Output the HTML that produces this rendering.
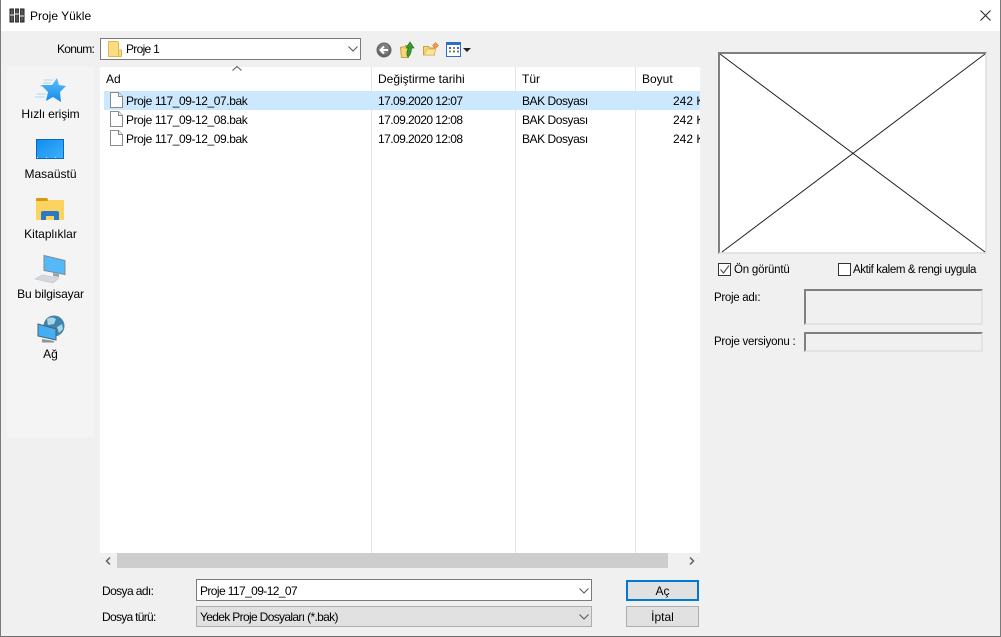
<!DOCTYPE html>
<html><head><meta charset="utf-8"><style>
html,body{margin:0;padding:0}
body{width:1001px;height:637px;overflow:hidden;position:relative;background:#f0f0f0;font:12px "Liberation Sans",sans-serif;color:#000}
.a{position:absolute}
.t{position:absolute;white-space:nowrap;line-height:14px}
.c{text-align:center}
.n{letter-spacing:-.42px}
.d{letter-spacing:-.56px}
.b{letter-spacing:-.45px}
.r{font-size:11.5px}
svg{position:absolute;overflow:visible}
</style></head><body>
<div class="a" style="left:0;top:0;width:1001px;height:31px;background:#fff"></div>
<div class="a" style="left:0;top:636px;width:1001px;height:1px;background:#6e6e6e"></div>
<div class="a" style="left:0;top:0;width:1px;height:637px;background:#7a7a7a"></div>
<div class="a" style="left:1000px;top:0;width:1px;height:637px;background:#7a7a7a"></div>

<svg style="left:9px;top:8px" width="16" height="15" viewBox="0 0 16 15"><path d="M1 1h4v13H1zM6 1h4v13H6zM11 1h4v13h-4z" fill="#555" stroke="#222"/><path d="M1 7h4M6 6h4M11 8h4" stroke="#eee"/><path d="M5.500 0v15M10.500 0v15" stroke="#fff"/></svg>
<div class="t" style="left:30px;top:9px;font-size:12px">Proje Yükle</div>
<svg style="left:980px;top:10px" width="11" height="11" viewBox="0 0 11 11"><path d="M.5.500l10 10M10.500.500l-10 10" stroke="#222" fill="none"/></svg>

<div class="t" style="left:57px;top:42px;letter-spacing:-.7px">Konum:</div>
<div class="a" style="left:100px;top:38px;width:259px;height:20px;background:#fff;border:1px solid #7a7a7a"></div>
<svg style="left:108px;top:41px" width="14" height="16" viewBox="0 0 14 16"><path d="M.5.500h9l1 1v14H.500z" fill="#fbdc85" stroke="#e2b84f"/><path d="M10.500 9h3v6.500h-3z" fill="#f8d775" stroke="#e2b84f"/></svg>
<div class="t" style="left:126px;top:42px;letter-spacing:-.7px">Proje 1</div>
<svg style="left:348px;top:46px" width="10" height="6" viewBox="0 0 10 6"><path d="M.5.500L5 5 9.500.500" stroke="#555" fill="none"/></svg>

<svg style="left:376px;top:42px" width="16" height="16" viewBox="0 0 16 16"><circle cx="8" cy="8" r="7.500" fill="#666"/><circle cx="8" cy="7" r="5.500" fill="#808080"/><path d="M12 8H5M8 4.500L4.500 8 8 11.500" stroke="#fff" stroke-width="2" fill="none"/></svg>
<svg style="left:400px;top:41px" width="15" height="17" viewBox="0 0 15 17"><path d="M.5 6.500l5-1v-1h3v12H1.500z" fill="#f5d779" stroke="#c9a23e"/><path d="M8 16c-2-3-1-7 .5-9H6l4-6 4 6h-2.500c0 4-1 7-3.500 9z" fill="#3b9a2e" stroke="#21751c" stroke-width=".7"/></svg>
<svg style="left:423px;top:42px" width="16" height="15" viewBox="0 0 16 15"><path d="M.5 4.500h5l1 1.500h5v7H.500z" fill="#f5d779" stroke="#c9a23e"/><path d="M1 13l3-6h9l-2 6z" fill="#fbe59c" stroke="#d9b44e" stroke-width=".7"/><circle cx="12.500" cy="3.500" r="2.500" fill="#ec7b3a"/><path d="M12.500 0v7M9 3.500h7" stroke="#f0a060"/></svg>
<svg style="left:446px;top:42px" width="25" height="15" viewBox="0 0 25 15"><rect x=".5" y=".5" width="14" height="14" fill="#fff" stroke="#2a70c8"/><path d="M.5 1h14v2H.500z" fill="#2a70c8"/><path d="M3 5h2v2H3z" fill="#2a70c8"/><path d="M7 5h2v2H7z" fill="#d0703a"/><path d="M11 5h2v2h-2z" fill="#2a70c8"/><path d="M3 8.500h2v2H3z" fill="#888"/><path d="M7 8.500h2v2H7z" fill="#3a9a50"/><path d="M11 8.500h2v2h-2z" fill="#777"/><path d="M17 6h8l-4 4z" fill="#222"/></svg>

<!-- sidebar -->
<div class="a" style="left:7px;top:67px;width:87px;height:370px;background:#f4f4f4"></div>
<svg style="left:35px;top:77px" width="32" height="27" viewBox="0 0 32 27"><defs><linearGradient id="s" x1="0" y1="0" x2="0" y2="1"><stop offset="0" stop-color="#5cc0fb"/><stop offset="1" stop-color="#1488ea"/></linearGradient></defs><path d="M9 3h9M8 6h8M5 9h6M2 17h9M0 20h10" stroke="#a8d8f6"/><path d="M22 1l2 7 7 1-6 6 1 10-8-5-7 4 2-9-7-7 11 0z" fill="url(#s)"/></svg>
<div class="t c" style="left:7px;width:87px;top:107px;letter-spacing:-.1px">Hızlı erişim</div>
<svg style="left:36px;top:139px" width="28" height="21" viewBox="0 0 28 21"><defs><linearGradient id="d" x1="0" y1="0" x2="1" y2="1"><stop offset="0" stop-color="#0f8df0"/><stop offset="1" stop-color="#3fb0fc"/></linearGradient></defs><rect x=".5" y=".5" width="27" height="19" fill="url(#d)" stroke="#0e67b8"/><path d="M1 18.500h26" stroke="#bfe3fa" stroke-dasharray="1 8"/></svg>
<div class="t c" style="left:7px;width:87px;top:167px">Masaüstü</div>
<svg style="left:36px;top:197px" width="28" height="24" viewBox="0 0 28 24"><path d="M0 2q0-1 1-1h10l2 3h-13z" fill="#d69a0e"/><path d="M0 4h11l2-1h14q1 0 1 1v19H0z" fill="#fcd35f"/><path d="M5 23v-7q0-2 2-2h14q2 0 2 2v7h-5v-4h-8v4z" fill="#2a79c9"/></svg>
<div class="t c" style="left:7px;width:87px;top:227px">Kitaplıklar</div>
<svg style="left:33px;top:255px" width="33" height="28" viewBox="0 0 33 28"><path d="M11 .5l21 5v14l-21-4z" fill="#55b8f8" stroke="#7b8a96"/><path d="M20 18l6 1v3l-6-1z" fill="#98a2aa"/><path d="M2 24l7-4 17 3-6 5z" fill="#d4d8dc" stroke="#c0c5ca" stroke-width=".6"/></svg>
<div class="t c" style="left:7px;width:87px;top:287px;letter-spacing:-.15px">Bu bilgisayar</div>
<svg style="left:36px;top:315px" width="28" height="28" viewBox="0 0 28 28"><circle cx="18" cy="11" r="10.500" fill="#3f84ac"/><path d="M11 4q5-3 9 0l-2 5-6 1zM21 12l5-3 1 5-4 4z" fill="#a9d4e6"/><path d="M2 9l18 5v11L2 21z" fill="#43aef4" stroke="#4d6272"/><path d="M6 24l12 2v1.500H6z" fill="#8a949c"/></svg>
<div class="t c" style="left:7px;width:87px;top:347px">Ağ</div>

<!-- list -->
<div class="a" style="left:100px;top:67px;width:600px;height:486px;background:#fff"></div>
<div class="a" style="left:371px;top:67px;width:1px;height:486px;background:#e5e5e5"></div>
<div class="a" style="left:515px;top:67px;width:1px;height:486px;background:#e5e5e5"></div>
<div class="a" style="left:635px;top:67px;width:1px;height:486px;background:#e5e5e5"></div>
<svg style="left:232px;top:66px" width="10" height="5" viewBox="0 0 10 5"><path d="M.5 4.500L5 .5l4.500 4" stroke="#555" fill="none"/></svg>
<div class="t" style="left:106px;top:72px">Ad</div>
<div class="t" style="left:378px;top:72px">Değiştirme tarihi</div>
<div class="t" style="left:522px;top:72px">Tür</div>
<div class="t" style="left:642px;top:72px">Boyut</div>
<div class="a" style="left:104px;top:91px;width:596px;height:19px;background:#cce8ff"></div>

<svg style="left:110px;top:92px" width="13" height="16" viewBox="0 0 13 16"><path d="M.5.500h8l4 4v11H.500z" fill="#fff" stroke="#8a8a8a"/><path d="M8.500.500v4h4" fill="#eee" stroke="#8a8a8a"/></svg>
<div class="t n" style="left:126px;top:94px">Proje 117_09-12_07.bak</div>
<div class="t d" style="left:378px;top:94px">17.09.2020 12:07</div>
<div class="t b" style="left:522px;top:94px">BAK Dosyası</div>
<div class="a" style="left:636px;top:94px;width:64px;height:14px;overflow:hidden"><div class="t" style="left:37px;top:0">242 KB</div></div>

<svg style="left:110px;top:111px" width="13" height="16" viewBox="0 0 13 16"><path d="M.5.500h8l4 4v11H.500z" fill="#fff" stroke="#8a8a8a"/><path d="M8.500.500v4h4" fill="#eee" stroke="#8a8a8a"/></svg>
<div class="t n" style="left:126px;top:113px">Proje 117_09-12_08.bak</div>
<div class="t d" style="left:378px;top:113px">17.09.2020 12:08</div>
<div class="t b" style="left:522px;top:113px">BAK Dosyası</div>
<div class="a" style="left:636px;top:113px;width:64px;height:14px;overflow:hidden"><div class="t" style="left:37px;top:0">242 KB</div></div>

<svg style="left:110px;top:130px" width="13" height="16" viewBox="0 0 13 16"><path d="M.5.500h8l4 4v11H.500z" fill="#fff" stroke="#8a8a8a"/><path d="M8.500.500v4h4" fill="#eee" stroke="#8a8a8a"/></svg>
<div class="t n" style="left:126px;top:132px">Proje 117_09-12_09.bak</div>
<div class="t d" style="left:378px;top:132px">17.09.2020 12:08</div>
<div class="t b" style="left:522px;top:132px">BAK Dosyası</div>
<div class="a" style="left:636px;top:132px;width:64px;height:14px;overflow:hidden"><div class="t" style="left:37px;top:0">242 KB</div></div>

<!-- scrollbar -->
<div class="a" style="left:100px;top:553px;width:600px;height:15px;background:#f0f0f0"></div>
<div class="a" style="left:117px;top:553px;width:551px;height:15px;background:#cdcdcd"></div>
<svg style="left:105px;top:557px" width="6" height="8" viewBox="0 0 6 8"><path d="M5 .5L1.500 4 5 7.500" stroke="#606060" stroke-width="1.500" fill="none"/></svg>
<svg style="left:689px;top:557px" width="6" height="8" viewBox="0 0 6 8"><path d="M1 .5L4.500 4 1 7.500" stroke="#606060" stroke-width="1.500" fill="none"/></svg>

<!-- bottom -->
<div class="t" style="left:102px;top:584px;letter-spacing:-.6px">Dosya adı:</div>
<div class="a" style="left:196px;top:579px;width:394px;height:20px;background:#fff;border:1px solid #7a7a7a"></div>
<div class="t" style="left:200px;top:584px;letter-spacing:-.6px">Proje 117_09-12_07</div>
<svg style="left:579px;top:588px" width="10" height="6" viewBox="0 0 10 6"><path d="M.5.500L5 5 9.500.500" stroke="#555" fill="none"/></svg>
<div class="t" style="left:102px;top:610px;letter-spacing:-.7px">Dosya türü:</div>
<div class="a" style="left:196px;top:606px;width:394px;height:19px;background:#e1e1e1;border:1px solid #adadad"></div>
<div class="t" style="left:200px;top:610px;letter-spacing:-.66px">Yedek Proje Dosyaları (*.bak)</div>
<svg style="left:579px;top:614px" width="10" height="6" viewBox="0 0 10 6"><path d="M.5.500L5 5 9.500.500" stroke="#555" fill="none"/></svg>
<div class="a c" style="left:626px;top:580px;width:69px;height:17px;background:#e1e1e1;border:2px solid #0078d7;line-height:18px">Aç</div>
<div class="a c" style="left:626px;top:606px;width:71px;height:19px;background:#e1e1e1;border:1px solid #adadad;line-height:20px">İptal</div>

<!-- preview -->
<div class="a" style="left:718px;top:52px;width:265px;height:198px;background:#fff;border:2px solid;border-color:#808080 #e3e3e3 #e3e3e3 #808080"></div>
<svg style="left:720px;top:54px" width="265" height="198" viewBox="0 0 265 198"><path d="M0 0L265 198M265 0L2 198" stroke="#222" stroke-width="1" fill="none"/></svg>

<div class="a" style="left:718px;top:263px;width:11px;height:11px;background:#fff;border:1px solid #333"></div>
<svg style="left:719px;top:264px" width="11" height="11" viewBox="0 0 11 11"><path d="M1.500 5.500L4.500 9 10 1.500" stroke="#555" stroke-width="1.200" fill="none"/></svg>
<div class="t r" style="left:734px;top:263px;letter-spacing:-.2px">Ön görüntü</div>
<div class="a" style="left:838px;top:263px;width:11px;height:11px;background:#fff;border:1px solid #333"></div>
<div class="t r" style="left:853px;top:263px;letter-spacing:-.38px">Aktif kalem &amp; rengi uygula</div>
<div class="t r" style="left:714px;top:291px;letter-spacing:-.3px">Proje adı:</div>
<div class="a" style="left:804px;top:289px;width:175px;height:32px;background:#f0f0f0;border:2px solid;border-color:#808080 #e3e3e3 #e3e3e3 #808080"></div>
<div class="t r" style="left:714px;top:335px;letter-spacing:-.25px">Proje versiyonu :</div>
<div class="a" style="left:804px;top:332px;width:175px;height:16px;background:#f0f0f0;border:2px solid;border-color:#808080 #e3e3e3 #e3e3e3 #808080"></div>
</body></html>
